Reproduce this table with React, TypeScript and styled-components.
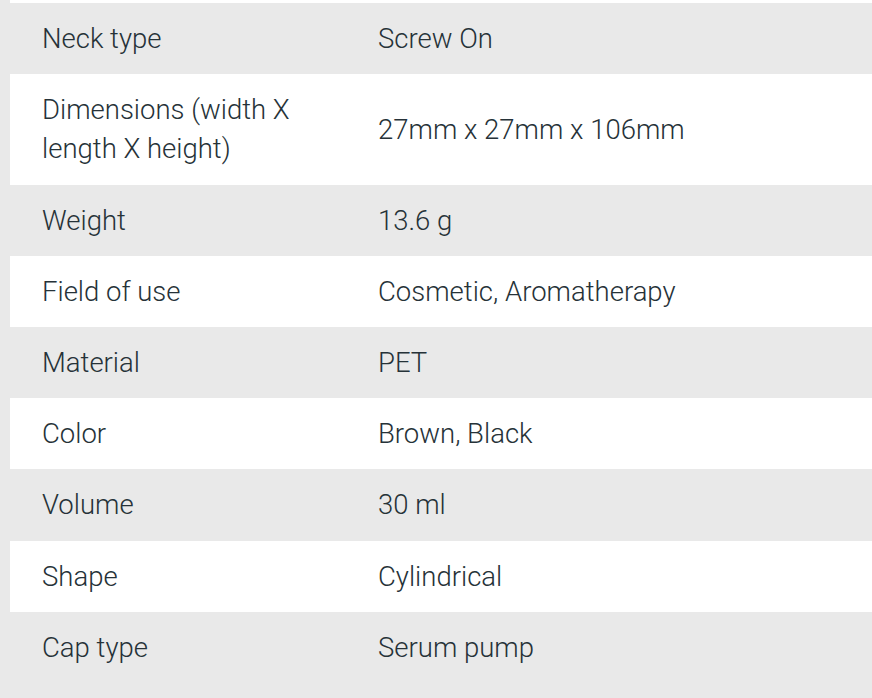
import React from "react";
import styled, { createGlobalStyle } from "styled-components";

const GlobalStyle = createGlobalStyle`
  html, body {
    margin: 0;
    padding: 0;
    background: #e9e9e9;
    overflow: hidden;
  }
  body {
    font-family: "Roboto Light", Roboto, "Liberation Sans", sans-serif;
  }
`;

const Page = styled.div`
  width: 872px;
  height: 698px;
  overflow: hidden;
  background: #e9e9e9;
`;

const Table = styled.div`
  margin-left: 10px;
  display: flex;
  flex-direction: column;
`;

const TopEdge = styled.div`
  height: 3px;
  background: #ffffff;
`;

const Row = styled.div<{ $shaded: boolean }>`
  display: grid;
  grid-template-columns: 336px 1fr;
  align-items: center;
  background: ${(p) => (p.$shaded ? "transparent" : "#ffffff")};
  padding: 16px 0;
`;

const Cell = styled.div`
  padding: 0 32px;
  font-size: 27.5px;
  font-weight: 300;
  line-height: 39.2px;
  color: #263238;
`;

const specs: [string, string][] = [
  ["Neck type", "Screw On"],
  ["Dimensions (width X length X height)", "27mm x 27mm x 106mm"],
  ["Weight", "13.6 g"],
  ["Field of use", "Cosmetic, Aromatherapy"],
  ["Material", "PET"],
  ["Color", "Brown, Black"],
  ["Volume", "30 ml"],
  ["Shape", "Cylindrical"],
  ["Cap type", "Serum pump"],
];

export default function App() {
  return (
    <Page>
      <GlobalStyle />
      <Table>
        <TopEdge />
        {specs.map(([label, value], i) => (
          <Row key={label} $shaded={i % 2 === 0}>
            <Cell>{label}</Cell>
            <Cell>{value}</Cell>
          </Row>
        ))}
      </Table>
    </Page>
  );
}
